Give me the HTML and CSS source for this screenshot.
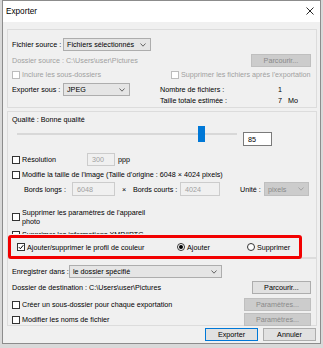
FILE: index.html
```html
<!DOCTYPE html>
<html lang="fr">
<head>
    <meta charset="UTF-8">
    <meta name="viewport" content="width=device-width, initial-scale=1.0">
    <title>Exporter</title>
    <link rel="stylesheet" href="styles.css">
</head>
<body>

    <div class="window">
        <div class="titlebar">
            <span class="title">Exporter</span>
            <svg class="close" width="8" height="8" viewBox="0 0 8 8"><path d="M0.5 0.5 L7.5 7.5 M7.5 0.5 L0.5 7.5" stroke="#111" stroke-width="0.9" fill="none"/></svg>
        </div>

        <div class="client">

            <!-- source -->
            <div class="group group-source">
                <div class="row mt8">
                    <span class="w51">Fichier source :</span>
                    <div class="select w88">Fichiers sélectionnés
                        <svg width="6" height="4" viewBox="0 0 6 4"><polyline points="0.5,0.5 3,3.2 5.5,0.5" fill="none" stroke="#444" stroke-width="0.8"/></svg>
                    </div>
                </div>
                <div class="row mt3">
                    <span class="off">Dossier source : C:\Users\user\Pictures</span>
                    <span class="btn btn-off w60 push">Parcourir...</span>
                </div>
                <div class="row row-small mt3">
                    <label class="check w159"><span class="cb cb-off"></span><span class="off">Inclure les sous-dossiers</span></label>
                    <label class="check"><span class="cb cb-off"></span><span class="off">Supprimer les fichiers après l'exportation</span></label>
                </div>
                <div class="stats mt4">
                    <div class="row">
                        <span class="w51">Exporter sous :</span>
                        <div class="select w67">JPEG
                            <svg width="6" height="4" viewBox="0 0 6 4"><polyline points="0.5,0.5 3,3.2 5.5,0.5" fill="none" stroke="#444" stroke-width="0.8"/></svg>
                        </div>
                    </div>
                    <span>Nombre de fichiers :</span>
                    <span>1</span>
                    <span></span>
                    <span></span>
                    <span>Taille totale estimée :</span>
                    <span>7</span>
                    <span>Mo</span>
                </div>
            </div>

            <!-- qualite / options -->
            <div class="group group-options">
                <div class="row row-small mt3">Qualité : Bonne qualité</div>
                <div class="row row-slider mt2">
                    <div class="slider">
                        <div class="track"></div>
                        <div class="thumb" style="left: 181px"></div>
                    </div>
                    <span class="input w29">85</span>
                </div>
                <div class="row mt6">
                    <span class="cb"></span>
                    <span class="w65 gap2">Résolution</span>
                    <span class="input input-off w28">300</span>
                    <span class="unit">ppp</span>
                </div>
                <div class="row row-small mt4">
                    <label class="check"><span class="cb"></span><span>Modifie la taille de l'image (Taille d'origine : 6048 × 4024 pixels)</span></label>
                </div>
                <div class="row row-size mt3">
                    <span class="w48">Bords longs :</span>
                    <span class="input input-off w43">6048</span>
                    <span class="times">×</span>
                    <span class="w47">Bords courts :</span>
                    <span class="input input-off w40">4024</span>
                    <span class="unit-lbl">Unité :</span>
                    <div class="select select-off w45">pixels
                        <svg width="6" height="4" viewBox="0 0 6 4"><polyline points="0.5,0.5 3,3.2 5.5,0.5" fill="none" stroke="#999" stroke-width="0.8"/></svg>
                    </div>
                </div>
                <div class="row row-two mt12">
                    <label class="check"><span class="cb"></span><span>Supprimer les paramètres de l'appareil<br>photo</span></label>
                </div>
                <div class="clip mt3">
                    <label class="check"><span class="cb"></span><span>Supprimer les informations XMP/IPTC</span></label>
                </div>

                <div class="highlight">
                    <label class="check w160"><span class="cb cb-on"><svg width="6" height="6" viewBox="0 0 6 6"><path d="M0.8 3.1 L2.4 4.7 L5.3 1.2" fill="none" stroke="#000" stroke-width="1"/></svg></span><span>Ajouter/supprimer le profil de couleur</span></label>
                    <label class="check w70"><span class="radio radio-on"></span><span>Ajouter</span></label>
                    <label class="check"><span class="radio"></span><span>Supprimer</span></label>
                </div>
            </div>

            <!-- destination -->
            <div class="group group-dest">
                <div class="row mt6">
                    <span class="w57">Enregistrer dans :</span>
                    <div class="select w153">le dossier spécifié
                        <svg width="6" height="4" viewBox="0 0 6 4"><polyline points="0.5,0.5 3,3.2 5.5,0.5" fill="none" stroke="#444" stroke-width="0.8"/></svg>
                    </div>
                </div>
                <div class="row mt3">
                    <span>Dossier de destination : C:\Users\user\Pictures</span>
                    <span class="btn w59 push">Parcourir...</span>
                </div>
                <div class="row mt4">
                    <label class="check"><span class="cb"></span><span>Créer un sous-dossier pour chaque exportation</span></label>
                    <span class="btn btn-off w67 push">Paramètres...</span>
                </div>
                <div class="row mt2">
                    <label class="check"><span class="cb"></span><span>Modifier les noms de fichier</span></label>
                    <span class="btn btn-off w67 push">Paramètres...</span>
                </div>
            </div>

            <div class="actions">
                <span class="btn btn-default w53">Exporter</span>
                <span class="btn w53">Annuler</span>
            </div>
        </div>
    </div>

</body>
</html>
```

FILE: styles.css
```css
body {
    margin: 0;
    padding: 0;
    background-color: #d9d9d9;
    font-family: "Liberation Sans", Arial, sans-serif;
    font-size: 7.2px;
    line-height: 9px;
    color: #000;
}

.window {
    box-sizing: border-box;
    width: 319px;
    height: 344px;
    margin-left: 2px;
    border: 1px solid #8c8c8c;
    background-color: #f0f0f0;
    display: flex;
    flex-direction: column;
}

.titlebar {
    height: 21px;
    background-color: #fff;
    display: flex;
    align-items: center;
    padding: 0 4px 0 3px;
}

.title {
    font-size: 8.2px;
    margin-top: -1px;
}

.close {
    margin-left: auto;
    margin-right: 2px;
    margin-top: -2px;
}

.client {
    padding: 0 3px 0 4px;
}

.group {
    border: 1px solid #dcdcdc;
    padding: 0 5px 0 4px;
}

.group-source {
    margin-top: 7px;
    padding-bottom: 2px;
}

.group-options {
    margin-top: 3px;
}

.group-dest {
    height: 66px;
}

.row {
    display: flex;
    align-items: center;
    height: 13px;
    white-space: nowrap;
}

.row-small { height: 9px; }
.row-size { height: 14px; }
.row-two { height: 18px; }

.row-slider {
    height: 21px;
    align-items: flex-start;
}

.mt2 { margin-top: 2px; }
.mt3 { margin-top: 3px; }
.mt4 { margin-top: 4px; }
.mt6 { margin-top: 6px; }
.mt8 { margin-top: 8px; }
.mt12 { margin-top: 12px; }

.push { margin-left: auto; }

.w28 { width: 28px; }
.w29 { width: 29px; }
.w40 { width: 40px; }
.w43 { width: 43px; }
.w45 { width: 45px; }
.w47 { width: 47px; }
.w48 { width: 48px; }
.w51 { width: 51px; }
.w53 { width: 53px; }
.w57 { width: 57px; }
.w59 { width: 59px; }
.w60 { width: 60px; }
.w65 { width: 65px; }
.w67 { width: 67px; }
.w70 { width: 70px; }
.w88 { width: 88px; }
.w153 { width: 153px; }
.w159 { width: 159px; }
.w160 { width: 160px; }

.off { color: #a0a0a0; }

.select {
    box-sizing: border-box;
    height: 13px;
    display: flex;
    align-items: center;
    justify-content: space-between;
    padding: 0 4px 0 3px;
    background-color: #e5e5e5;
    border: 1px solid #adadad;
}

.select-off {
    height: 14px;
    background-color: #cccccc;
    border-color: #bfbfbf;
    color: #8a8a8a;
}

.input {
    box-sizing: border-box;
    height: 14px;
    display: flex;
    align-items: center;
    padding-left: 4px;
    background-color: #fff;
    border: 1px solid #7a7a7a;
}

.row .input-off {
    height: 13px;
    background-color: #f0f0f0;
    border-color: #cccccc;
    color: #a0a0a0;
}

.row-size .input-off { height: 14px; }

.btn {
    box-sizing: border-box;
    height: 13px;
    display: flex;
    align-items: center;
    justify-content: center;
    background-color: #e1e1e1;
    border: 1px solid #adadad;
}

.btn-off {
    background-color: #cccccc;
    border-color: #bfbfbf;
    color: #8a8a8a;
}

.btn-default {
    border-color: #0078d7;
}

.check {
    display: flex;
    align-items: center;
    gap: 2px;
}

.cb {
    box-sizing: border-box;
    width: 8px;
    height: 8px;
    flex: none;
    background-color: #fff;
    border: 1px solid #333;
    display: flex;
    align-items: center;
    justify-content: center;
}

.cb-off {
    border-color: #bcbcbc;
}

.gap2 { margin-left: 2px; }

.radio {
    box-sizing: border-box;
    width: 8px;
    height: 8px;
    flex: none;
    border: 1px solid #333;
    border-radius: 50%;
    background-color: #fff;
    display: flex;
    align-items: center;
    justify-content: center;
}

.radio-on::after {
    content: "";
    width: 4px;
    height: 4px;
    border-radius: 50%;
    background-color: #000;
}

.stats {
    display: grid;
    grid-template-columns: 148px 118px 10px auto;
    grid-template-rows: 13px 9px;
    align-items: center;
    white-space: nowrap;
}

.slider {
    position: relative;
    width: 220px;
    height: 16px;
    margin-left: 5px;
}

.track {
    position: absolute;
    left: 0;
    right: 0;
    top: 7px;
    height: 2px;
    background-color: #d8d8d8;
}

.thumb {
    position: absolute;
    top: 0;
    width: 7px;
    height: 16px;
    background-color: #0078d7;
}

.slider + .input {
    margin-left: 6px;
    margin-top: 6px;
}

.unit { margin-left: 3px; }

.row-size { padding-left: 12px; }

.times {
    width: 11px;
    margin-left: 7px;
}

.unit-lbl {
    width: 24px;
    margin-left: 20px;
}

.clip {
    height: 5px;
    overflow: hidden;
    padding-top: 1px;
    box-sizing: border-box;
    white-space: nowrap;
}

.highlight {
    box-sizing: border-box;
    width: 294px;
    height: 24px;
    margin: 1px 0 -2px -4px;
    padding-left: 6px;
    border: 3px solid #f20000;
    border-radius: 3px;
    background-color: #f0f0f0;
    display: flex;
    align-items: center;
    white-space: nowrap;
    position: relative;
}

.actions {
    display: flex;
    justify-content: flex-end;
    gap: 5px;
    margin-top: 2px;
    padding-right: 1px;
}
```
